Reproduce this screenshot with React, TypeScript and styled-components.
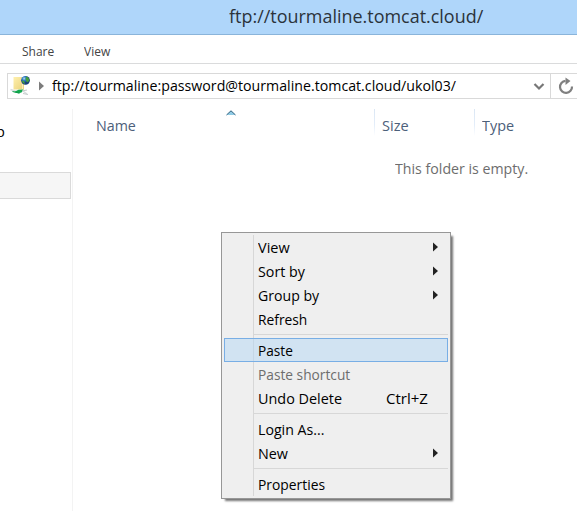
import React from "react";
import styled, { createGlobalStyle } from "styled-components";

const GlobalStyle = createGlobalStyle`
  * { box-sizing: border-box; }
  body {
    margin: 0;
    overflow: hidden;
    background: #fff;
    font-family: "Open Sans", "Noto Sans", sans-serif;
  }
`;

const Window = styled.div`
  position: relative;
  width: 577px;
  height: 511px;
  display: flex;
  flex-direction: column;
  overflow: hidden;
  background: #fff;
`;

const Label = styled.span<{ $fit?: number }>`
  display: inline-block;
  white-space: pre;
  transform: scaleX(${(p) => p.$fit ?? 0.94});
  transform-origin: 0 50%;
`;

const TitleBar = styled.header`
  flex: none;
  height: 35px;
  padding-left: 229px;
  background: #afd6fa;
  border-bottom: 1px solid #8ab4da;
  color: #2b333b;
  font-size: 18.5px;
  line-height: 32px;
`;

const RibbonTabs = styled.nav`
  flex: none;
  display: flex;
  height: 29px;
  padding-left: 22px;
  border-bottom: 1px solid #dadbdc;
  color: #444;
  font-size: 12.5px;
  line-height: 33px;
`;

const Tab = styled.div`
  width: 62px;
`;

const AddressRow = styled.div`
  flex: none;
  display: flex;
  height: 26px;
  margin: 9px 0 0 7px;
  border: 1px solid #d9d9d9;
  border-right: 0;
`;

const AddressField = styled.div`
  display: flex;
  flex: 1;
  align-items: center;
  padding-left: 1px;
  color: #000;
  font-size: 14.5px;
  line-height: 24px;
`;

const AddressText = styled.div`
  flex: 1;
  width: 0;
  padding-left: 7px;
  white-space: nowrap;
`;

const RefreshButton = styled.div`
  width: 27px;
  border-left: 1px solid #d9d9d9;
`;

const Icon = styled.svg`
  display: block;
  flex: none;
`;

const Body = styled.div`
  flex: 1;
  display: flex;
  margin-top: 10px;
`;

const NavPane = styled.aside`
  width: 73px;
  border-right: 1px solid #f3f3f3;
`;

const NavText = styled.div`
  height: 63px;
  margin-left: -4px;
  font-size: 14.5px;
  line-height: 45px;
`;

const NavSelected = styled.div`
  width: 71px;
  height: 27px;
  background: #f6f6f6;
  border: 1px solid #dadada;
  border-left: 0;
`;

const FilePane = styled.main`
  flex: 1;
`;

const ColumnHeads = styled.div`
  display: flex;
  height: 27px;
  color: #4c607a;
  font-size: 15px;
  line-height: 33px;
`;

const Column = styled.div<{ $width: number; $pad: number; $ruled?: boolean }>`
  position: relative;
  flex: none;
  width: ${(p) => p.$width}px;
  padding-left: ${(p) => p.$pad}px;
  background: ${(p) => (p.$ruled ? "linear-gradient(#dbe7f4, #e4eefa 60%, #fff) 0 0 / 1px 100% no-repeat" : "none")};
`;

const SortMark = styled.svg`
  position: absolute;
  left: 153px;
  top: 1px;
`;

const EmptyNotice = styled.div`
  padding: 19px 0 0 322px;
  color: #6d6d6d;
  font-size: 15px;
  line-height: 26px;
`;

const Menu = styled.div`
  position: absolute;
  left: 221px;
  top: 232px;
  width: 230px;
  height: 267px;
  padding: 2px;
  border: 1px solid #979797;
  background: linear-gradient(#d7d7d7, #d7d7d7) 31px 2px / 1px 261px no-repeat #efefef;
  box-shadow: 3px 3px 2px -1px rgba(0, 0, 0, 0.55);
`;

const MenuItem = styled.div<{ $active?: boolean; $disabled?: boolean }>`
  display: flex;
  align-items: center;
  height: 24px;
  padding: 0 9px 0 33px;
  border: 1px solid ${(p) => (p.$active ? "#78aee5" : "transparent")};
  background: ${(p) => (p.$active ? "rgba(179, 215, 245, 0.5)" : "transparent")};
  color: ${(p) => (p.$disabled ? "#6d6d6d" : "#000")};
  font-size: 15px;
  line-height: 22px;
`;

const ItemName = styled.div`
  width: 128px;
`;

const Arrow = styled.svg`
  margin: -1px 0 0 auto;
`;

const Separator = styled.div`
  height: 1px;
  margin: 3px 0 3px 30px;
  background: #d7d7d7;
`;

function FtpFolderIcon() {
  return (
    <Icon width="22" height="22" viewBox="0 0 22 22">
      <defs>
        <linearGradient id="folder" x2="1" y2="1">
          <stop stopColor="#fff0ad" />
          <stop offset="1" stopColor="#e9d27c" />
        </linearGradient>
        <radialGradient id="globe" cx=".35" cy=".3">
          <stop stopColor="#b8dcf5" />
          <stop offset=".45" stopColor="#2f7cc4" />
          <stop offset="1" stopColor="#183e7c" />
        </radialGradient>
      </defs>
      <path d="M4.500 2h8.500l2 2v10.500H4.500z" fill="url(#folder)" />
      <path d="M13.500 3v12" fill="none" stroke="#f9eebd" />
      <circle cx="16.500" cy="5.300" r="4.400" fill="url(#globe)" />
      <path d="M16.500 3.500l1-2c2 .8 3 2.500 2.700 4.500L18 7.500l-1-2zM13 5.500l2 .5 1 3c-2-.5-3-1.500-3-3.500z" fill="#43a13d" />
      <path d="M1.500 14.500l6 2M14 16l4 3" stroke="#d9dedf" strokeWidth="1.500" />
      <path d="M5 17l4.500-2.200 5-.3-2 3-3 .8z" fill="#12a84e" />
      <path d="M3.500 16.500l7 1.700" stroke="#0c9d48" />
      <path d="M13 16l5-1M14 18.500l5 1" stroke="#c3cbca" />
    </Icon>
  );
}

type Entry = { name: string; fit?: number; keys?: string; submenu?: boolean; active?: boolean; disabled?: boolean };

const groups: Entry[][] = [
  [
    { name: "View", fit: 0.965, submenu: true },
    { name: "Sort by", fit: 0.95, submenu: true },
    { name: "Group by", fit: 0.94, submenu: true },
    { name: "Refresh", fit: 0.92 },
  ],
  [
    { name: "Paste", fit: 0.91, active: true },
    { name: "Paste shortcut", fit: 0.915, disabled: true },
    { name: "Undo Delete", fit: 0.96, keys: "Ctrl+Z" },
  ],
  [{ name: "Login As...", fit: 0.945 }, { name: "New", fit: 0.955, submenu: true }],
  [{ name: "Properties", fit: 0.923 }],
];

function ContextMenu() {
  return (
    <Menu>
      {groups.map((group, i) => (
        <React.Fragment key={i}>
          {i > 0 && <Separator />}
          {group.map((e) => (
            <MenuItem key={e.name} $active={e.active} $disabled={e.disabled}>
              <ItemName><Label $fit={e.fit}>{e.name}</Label></ItemName>
              {e.keys && <Label $fit={1}>{e.keys}</Label>}
              {e.submenu && (
                <Arrow width="5" height="10" viewBox="0 0 5 10">
                  <path d="M0 .5L5 5 0 9.500z" fill="#222" />
                </Arrow>
              )}
            </MenuItem>
          ))}
        </React.Fragment>
      ))}
    </Menu>
  );
}

export default function App() {
  return (
    <Window>
      <GlobalStyle />
      <TitleBar><Label $fit={0.97}>ftp://tourmaline.tomcat.cloud/</Label></TitleBar>
      <RibbonTabs>
        <Tab><Label $fit={0.96}>Share</Label></Tab>
        <Tab><Label $fit={0.96}>View</Label></Tab>
      </RibbonTabs>
      <AddressRow>
        <AddressField>
          <FtpFolderIcon />
          <Icon width="14" height="12" viewBox="0 0 14 12">
            <path d="M8 1.500L13 6 8 10.500z" fill="#7c7c7c" />
          </Icon>
          <AddressText><Label $fit={0.978}>ftp://tourmaline:password@tourmaline.tomcat.cloud/ukol03/</Label></AddressText>
          <Icon width="24" height="24" viewBox="0 0 24 24">
            <path d="M8.500 10l4.500 4.500 4.500-4.500" fill="none" stroke="#777" strokeWidth="2.2" />
          </Icon>
        </AddressField>
        <RefreshButton>
          <Icon width="26" height="24" viewBox="0 0 26 24">
            <path d="M14.500 6.900A6 6 0 1 0 21 12.500" fill="none" stroke="#808080" strokeWidth="2.2" />
            <path d="M14.500 3.500l5 3.500-5 4z" fill="#808080" />
          </Icon>
        </RefreshButton>
      </AddressRow>
      <Body>
        <NavPane>
          <NavText>p</NavText>
          <NavSelected />
        </NavPane>
        <FilePane>
          <ColumnHeads>
            <Column $width={301} $pad={23}>
              <Label $fit={0.95}>Name</Label>
              <SortMark width="10" height="6" viewBox="0 0 10 6">
                <path d="M.5 5L5 .5 9.500 5z" fill="#8fcbe5" />
                <path d="M.5 5L5 .8 9.500 5" fill="none" stroke="#39647f" />
              </SortMark>
            </Column>
            <Column $width={100} $pad={8} $ruled><Label $fit={0.97}>Size</Label></Column>
            <Column $width={103} $pad={8} $ruled><Label $fit={0.96}>Type</Label></Column>
          </ColumnHeads>
          <EmptyNotice><Label $fit={0.945}>This folder is empty.</Label></EmptyNotice>
        </FilePane>
      </Body>
      <ContextMenu />
    </Window>
  );
}
